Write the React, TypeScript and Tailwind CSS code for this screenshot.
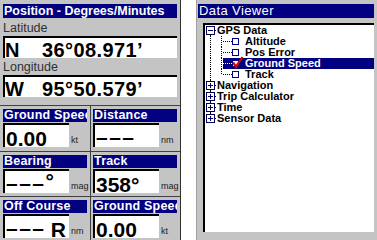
import React from "react";

type CellProps = {
  label: string;
  value: React.ReactNode;
  unit: string;
  first?: boolean;
};

// one gauge of the 2x3 grid
const Cell = ({ label, value, unit, first }: CellProps) => (
  <div className={first ? "w-[91px] border-r border-[#404040] pl-[3px] pt-[3px]" : "flex-1 pl-[2px] pt-[3px]"}>
    <div className="h-[13px] w-[84px] overflow-hidden whitespace-nowrap bg-[#000080] pl-[1px] text-[12.5px] font-bold leading-[13px] tracking-[0.2px] text-white">
      {label}
    </div>
    <div className="mt-[1px] flex items-end">
      <div className="flex h-[24px] w-[66px] items-end border-l-2 border-t-2 border-black bg-white pl-[1px]">
        {value}
      </div>
      <span className="mb-[2px] ml-[2px] text-[9px] leading-none text-[#202020]">{unit}</span>
    </div>
  </div>
);

const Big = ({ children }: { children: React.ReactNode }) => (
  <span className="text-[21px] font-bold leading-[17px] text-black">{children}</span>
);

const Dashes = ({ deg }: { deg?: boolean }) => (
  <span className="text-[21px] font-bold leading-[20px] text-black">
    <span className="tracking-[1.5px]">–––</span>
    {deg && <span className="relative -top-[2px]">°</span>}
  </span>
);

const dot = { stroke: "#000", strokeWidth: 1, strokeDasharray: "1 1" };

type TopProps = { label: string; open?: boolean; above?: boolean; below?: boolean };

const TopRow = ({ label, open, above, below }: TopProps) => (
  <div className="flex h-[11px] items-center">
    <svg width="12" height="11" className="shrink-0">
      {above && <line x1="5.5" y1="0" x2="5.5" y2="1" {...dot} />}
      {below && <line x1="5.5" y1="10" x2="5.5" y2="11" {...dot} />}
      <rect x="1.5" y="1.5" width="8" height="8" fill="#fff" stroke="#000060" />
      <line x1="3" y1="5.5" x2="8" y2="5.5" stroke="#000060" />
      {!open && <line x1="5.5" y1="3" x2="5.5" y2="8" stroke="#000060" />}
      <line x1="10" y1="5.5" x2="12" y2="5.5" {...dot} />
    </svg>
    <span className="whitespace-nowrap text-[11px] font-bold leading-none text-black">{label}</span>
  </div>
);

type ChildProps = { label: string; last?: boolean; checked?: boolean };

const ChildRow = ({ label, last, checked }: ChildProps) => (
  <div className="flex h-[11px]">
    <svg width="18" height="11" className="shrink-0">
      <line x1="5.5" y1="0" x2="5.5" y2="11" {...dot} />
      <line x1="16.5" y1="0" x2="16.5" y2={last ? 6 : 11} {...dot} />
    </svg>
    <div className={checked ? "flex flex-1 items-center bg-[#000080] text-white" : "flex flex-1 items-center text-black"}>
      <svg width="22" height="11" className="shrink-0 overflow-visible">
        <line x1="0" y1="5.5" x2="9" y2="5.5" {...dot} stroke={checked ? "#fff" : "#000"} />
        <rect x="9.5" y="2.5" width="6" height="6" fill="#fff" stroke="#000080" />
        {checked && <path d="M10 4.5 L13 8.5 L19.5 -1" fill="none" stroke="#e00000" strokeWidth="2.2" />}
      </svg>
      <span className="whitespace-nowrap text-[11px] font-bold leading-none">{label}</span>
    </div>
  </div>
);

export default function App() {
  return (
    <div className="flex h-[240px] w-[377px] overflow-hidden bg-white font-['Liberation_Sans','Arial',sans-serif]">
      {/* Position panel */}
      <div className="flex w-[181px] flex-col border-r border-[#303030] bg-[#c4c4c4]">
        <div className="px-[3px] pt-[4px]">
          <div className="h-[14px] whitespace-nowrap bg-[#000080] pl-[1px] text-[12.5px] font-bold leading-[14px] text-white">
            Position - Degrees/Minutes
          </div>
          <div className="flex h-[18px] items-end pb-[2px] text-[12.5px] leading-none text-[#303030]">Latitude</div>
          <div className="flex h-[22px] items-end border-l-2 border-t-2 border-black bg-white">
            <span className="w-[37px] text-[20px] font-bold leading-[16px]">N</span>
            <span className="text-[20px] font-bold leading-[16px] tracking-[0.4px]">36°08.971’</span>
          </div>
          <div className="flex h-[17px] items-end pb-[2px] text-[12.5px] leading-none text-[#303030]">Longitude</div>
          <div className="flex h-[22px] items-end border-l-2 border-t-2 border-black bg-white">
            <span className="w-[37px] text-[20px] font-bold leading-[16px]">W</span>
            <span className="text-[20px] font-bold leading-[16px] tracking-[0.4px]">95°50.579’</span>
          </div>
        </div>
        <div className="mt-[8px] flex h-[46px] border-t border-[#404040]">
          <Cell first label="Ground Speed" value={<Big>0.00</Big>} unit="kt" />
          <Cell label="Distance" value={<Dashes />} unit="nm" />
        </div>
        <div className="flex h-[45px] border-t border-[#404040]">
          <Cell first label="Bearing" value={<Dashes deg />} unit="mag" />
          <Cell label="Track" value={<Big>358°</Big>} unit="mag" />
        </div>
        <div className="flex flex-1 border-t border-[#404040]">
          <Cell
            first
            label="Off Course"
            value={
              <div className="flex flex-1 items-end justify-between pr-[3px]">
                <Dashes />
                <Big>R</Big>
              </div>
            }
            unit="nm"
          />
          <Cell label="Ground Speed" value={<Big>0.00</Big>} unit="kt" />
        </div>
      </div>

      <div className="w-[15px] shrink-0" />

      {/* Data viewer panel */}
      <div className="flex flex-1 flex-col border-l border-[#a0a0a0] bg-[#c4c4c4] pb-[8px] pl-[1px] pr-[3px] pt-[4px]">
        <div className="h-[14px] whitespace-nowrap bg-[#000080] pl-[1px] text-[13px] leading-[14px] tracking-[0.4px] text-white">
          Data Viewer
        </div>
        <div className="ml-[5px] mt-[5px] flex-1 border-l-2 border-t-2 border-black bg-white font-['Liberation_Sans_Narrow','Liberation_Sans',sans-serif]">
          <TopRow label="GPS Data" open below />
          <ChildRow label="Altitude" />
          <ChildRow label="Pos Error" />
          <ChildRow label="Ground Speed" checked />
          <ChildRow label="Track" last />
          <TopRow label="Navigation" above below />
          <TopRow label="Trip Calculator" above below />
          <TopRow label="Time" above below />
          <TopRow label="Sensor Data" above />
        </div>
      </div>
    </div>
  );
}
